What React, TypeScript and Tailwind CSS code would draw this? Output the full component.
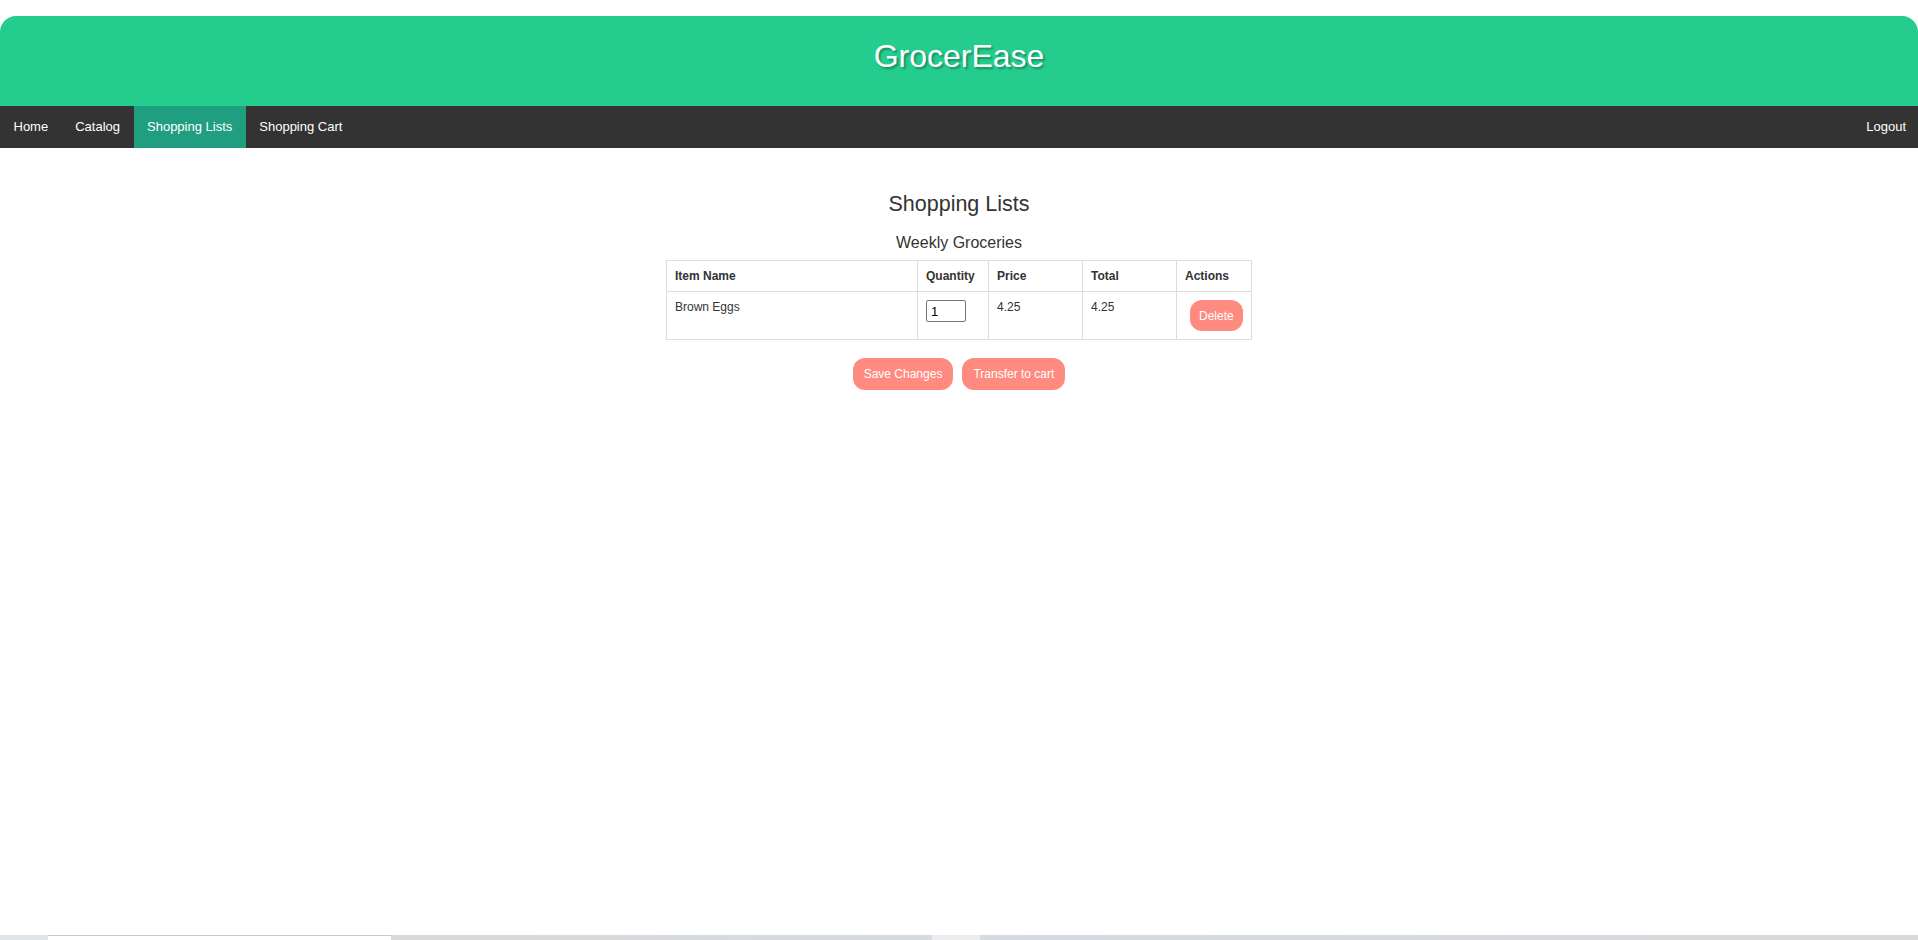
const navLinks = ["Home", "Catalog", "Shopping Lists", "Shopping Cart"];

const items = [{ name: "Brown Eggs", quantity: 1, price: "4.25", total: "4.25" }];

const App = () => {
  return (
    <div className="min-h-[940px] flex flex-col bg-white text-[#333] font-['Liberation_Sans',Arial,sans-serif]">
      <header className="mt-4 h-[90px] pt-[22px] rounded-t-[16px] bg-[#24cd8d] text-center">
        <h1 className="text-[32px] leading-[37px] text-white [text-shadow:2px_2px_2px_rgba(0,0,0,0.3)]">
          GrocerEase
        </h1>
      </header>

      <nav className="h-[42px] flex bg-[#333333] text-[13px] text-white">
        {navLinks.map((link) => (
          <a
            key={link}
            href="#"
            className={
              link === "Shopping Lists"
                ? "flex items-center px-[13.5px] bg-[#1f9e80]"
                : "flex items-center px-[13.5px]"
            }
          >
            {link}
          </a>
        ))}
        <a href="#" className="ml-auto flex items-center px-[12px]">
          Logout
        </a>
      </nav>

      <main className="flex flex-col items-center">
        <h3 className="mt-[44px] text-[21.5px] leading-[25px]">Shopping Lists</h3>
        <h4 className="mt-[17px] text-[16px] leading-[18px]">Weekly Groceries</h4>

        <table className="mt-[8px] w-[585px] table-fixed border-collapse text-left text-[12px]">
          <colgroup>
            <col className="w-[251px]" />
            <col className="w-[71px]" />
            <col className="w-[94px]" />
            <col className="w-[94px]" />
            <col className="w-[75px]" />
          </colgroup>
          <thead>
            <tr className="font-bold">
              <th className="border border-[#dddddd] p-[8px] leading-[14px]">Item Name</th>
              <th className="border border-[#dddddd] p-[8px] leading-[14px]">Quantity</th>
              <th className="border border-[#dddddd] p-[8px] leading-[14px]">Price</th>
              <th className="border border-[#dddddd] p-[8px] leading-[14px]">Total</th>
              <th className="border border-[#dddddd] p-[8px] leading-[14px]">Actions</th>
            </tr>
          </thead>
          <tbody>
            {items.map((item) => (
              <tr key={item.name}>
                <td className="border border-[#dddddd] p-[8px] align-top leading-[14px]">{item.name}</td>
                <td className="border border-[#dddddd] p-[8px] align-top">
                  <input
                    type="number"
                    defaultValue={item.quantity}
                    className="block w-[40px] h-[22px] px-[4px] border border-[#767676] rounded-[2px] text-[13px] text-black [appearance:textfield]"
                  />
                </td>
                <td className="border border-[#dddddd] p-[8px] align-top leading-[14px]">{item.price}</td>
                <td className="border border-[#dddddd] p-[8px] align-top leading-[14px]">{item.total}</td>
                <td className="border border-[#dddddd] p-[8px] align-top">
                  <button className="ml-[5px] h-[31px] px-[9px] rounded-[12px] bg-[#ff8b80] text-white text-[12px]">
                    Delete
                  </button>
                </td>
              </tr>
            ))}
          </tbody>
        </table>

        <div className="mt-[18px] flex gap-[9px]">
          <button className="h-[32px] px-[11px] rounded-[12px] bg-[#ff8b80] text-white text-[12px]">
            Save Changes
          </button>
          <button className="h-[32px] px-[11px] rounded-[12px] bg-[#ff8b80] text-white text-[12px]">
            Transfer to cart
          </button>
        </div>
      </main>

      <div className="mt-auto h-[5px] flex">
        <div className="w-[48px] bg-[#dfe3ea]" />
        <div className="w-[343px] bg-white border-t border-[#c8c8c8]" />
        <div className="w-[541px] bg-gradient-to-r from-[#d9d9d9] to-[#d6dbe1]" />
        <div className="w-[48px] bg-[#ececef]" />
        <div className="flex-1 bg-gradient-to-r from-[#d5dae3] to-[#d9d9d9]" />
      </div>
    </div>
  );
};

export default App;
